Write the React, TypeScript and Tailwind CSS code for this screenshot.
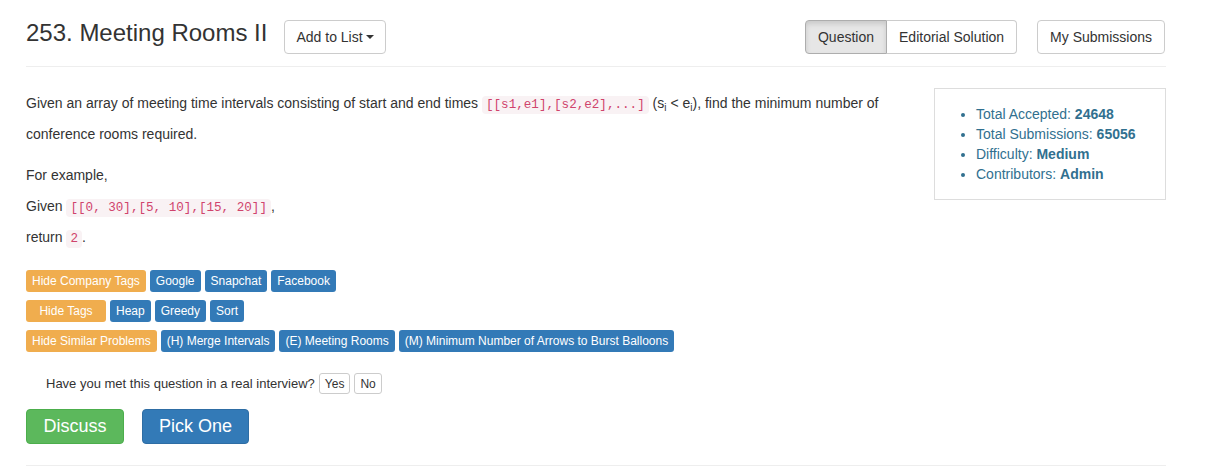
import React from "react";

const Code = ({ children }: { children: React.ReactNode }) => (
  <code className="rounded-[4px] bg-[#f9f2f4] px-[4px] py-[2px] font-['Liberation_Mono',monospace] text-[12.6px] leading-none text-[#d0436c]">
    {children}
  </code>
);

const Tag = ({ children, warn, className = "" }: { children: React.ReactNode; warn?: boolean; className?: string }) => (
  <span
    className={`inline-flex h-[22px] items-center justify-center rounded-[3px] px-[6px] text-[12px] text-white ${
      warn ? "bg-[#f0ad4e]" : "bg-[#337ab7]"
    } ${className}`}
  >
    {children}
  </span>
);

const App = () => {
  const companies = ["Google", "Snapchat", "Facebook"];
  const tags = ["Heap", "Greedy", "Sort"];
  const similar = ["(H) Merge Intervals", "(E) Meeting Rooms", "(M) Minimum Number of Arrows to Burst Balloons"];

  return (
    <div className="min-h-[470px] bg-white font-['Liberation_Sans',Arial,sans-serif] text-[14px] text-[#333]">
      <div className="ml-[26px] w-[1140px]">
        {/* header */}
        <div className="flex items-start border-b border-[#eee] pt-[20px] pb-[12px]">
          <h3 className="text-[24px] leading-[26px]">253. Meeting Rooms II</h3>
          <button className="ml-[17px] flex h-[34px] items-center rounded-[4px] border border-[#ccc] px-[11px] text-[14px] text-[#333]">
            Add to List
            <span className="ml-[3px] inline-block h-0 w-0 border-x-[4px] border-t-[4px] border-x-transparent border-t-[#333]"></span>
          </button>
          <div className="ml-auto mr-[1px] flex">
            <div className="flex">
              <button className="h-[34px] rounded-l-[4px] border border-[#adadad] bg-[#e6e6e6] px-[12px] shadow-[inset_0_3px_5px_rgba(0,0,0,0.125)]">
                Question
              </button>
              <button className="h-[34px] rounded-r-[4px] border border-l-0 border-[#ccc] px-[12px]">Editorial Solution</button>
            </div>
            <button className="ml-[20px] h-[34px] rounded-[4px] border border-[#ccc] px-[12px]">My Submissions</button>
          </div>
        </div>

        {/* body */}
        <div className="mt-[21px] flex items-start">
          <div className="w-[880px]">
            <p className="leading-[31px]">
              Given an array of meeting time intervals consisting of start and end times <Code>[[s1,e1],[s2,e2],...]</Code> (s
              <sub className="text-[10px]">i</sub> &lt; e<sub className="text-[10px]">i</sub>), find the minimum number of
              conference rooms required.
            </p>
            <p className="mt-[10px] leading-[31px]">
              For example,
              <br />
              Given <Code>[[0, 30],[5, 10],[15, 20]]</Code>,
              <br />
              return <Code>2</Code>.
            </p>

            <div className="mt-[13px]">
              <div className="flex h-[30px] items-center gap-[4px]">
                <Tag warn>Hide Company Tags</Tag>
                {companies.map((c) => (
                  <Tag key={c}>{c}</Tag>
                ))}
              </div>
              <div className="flex h-[30px] items-center gap-[4px]">
                <Tag warn className="w-[80px]">
                  Hide Tags
                </Tag>
                {tags.map((c) => (
                  <Tag key={c}>{c}</Tag>
                ))}
              </div>
              <div className="flex h-[30px] items-center gap-[4px]">
                <Tag warn>Hide Similar Problems</Tag>
                {similar.map((c) => (
                  <Tag key={c}>{c}</Tag>
                ))}
              </div>
            </div>

            <div className="mt-[17px] flex items-center pl-[20px] text-[13px]">
              <span>Have you met this question in a real interview?</span>
              <button className="ml-[4px] h-[21px] rounded-[3px] border border-[#ccc] px-[5px] text-[12px]">Yes</button>
              <button className="ml-[4px] h-[21px] rounded-[3px] border border-[#ccc] px-[5px] text-[12px]">No</button>
            </div>

            <div className="mt-[15px] flex gap-[18px]">
              <button className="h-[35px] w-[98px] rounded-[4px] border border-[#4cae4c] bg-[#5cb85c] text-[18px] text-white">
                Discuss
              </button>
              <button className="h-[35px] w-[107px] rounded-[4px] border border-[#2e6da4] bg-[#337ab7] text-[18px] text-white">
                Pick One
              </button>
            </div>
          </div>

          <div className="ml-auto w-[232px] border border-[#ddd] pt-[15px] pb-[15px] pl-[41px] text-[#31708f]">
            <ul className="list-disc leading-[20px]">
              <li>
                Total Accepted: <b>24648</b>
              </li>
              <li>
                Total Submissions: <b>65056</b>
              </li>
              <li>
                Difficulty: <b>Medium</b>
              </li>
              <li>
                Contributors: <b>Admin</b>
              </li>
            </ul>
          </div>
        </div>

        <div className="mt-[21px] border-b border-[#eee]"></div>
      </div>
    </div>
  );
};

export default App;
